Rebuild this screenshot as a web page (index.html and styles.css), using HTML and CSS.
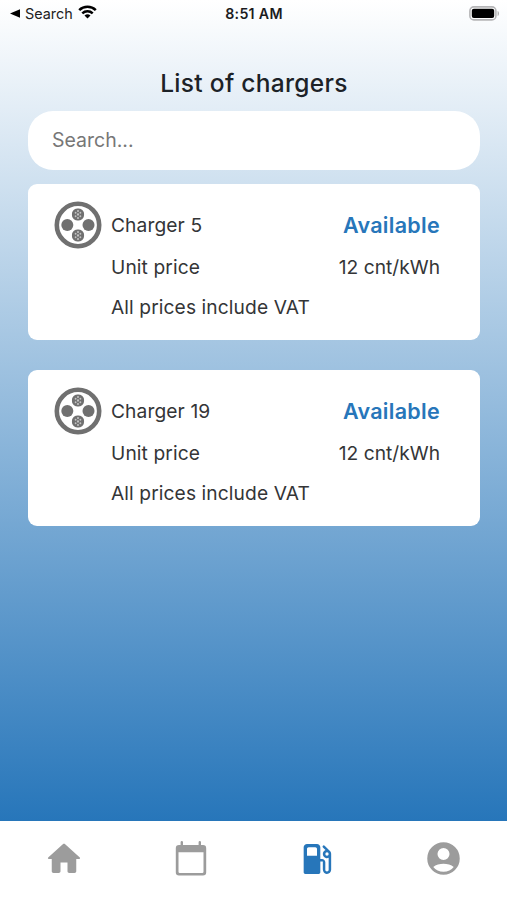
FILE: index.html
```html
<!DOCTYPE html>
<html lang="en">
<head>
<meta charset="utf-8">
<title>List of chargers</title>
<link rel="stylesheet" href="styles.css">
</head>
<body>
<svg class="defs" aria-hidden="true">
  <defs>
    <symbol id="pin" viewBox="0 0 12 12">
      <circle cx="6" cy="6" r="6" fill="#707070"/>
      <g fill="#c2c2c2"><circle cx="6" cy="2.700" r="1"/><circle cx="6" cy="6" r="1.100"/><circle cx="6" cy="9.300" r="1"/><circle cx="3.700" cy="4.350" r=".9"/><circle cx="8.300" cy="4.350" r=".9"/><circle cx="3.700" cy="7.650" r=".9"/><circle cx="8.300" cy="7.650" r=".9"/></g>
    </symbol>
    <symbol id="plug" viewBox="0 0 48 48">
      <circle cx="24" cy="24" r="21.200" fill="#fff" stroke="#707070" stroke-width="4.600"/>
      <circle cx="13.300" cy="24" r="6" fill="#707070"/>
      <circle cx="34.500" cy="24" r="6" fill="#707070"/>
      <use href="#pin" x="17.800" y="7.300" width="12.400" height="12.400"/>
      <use href="#pin" x="17.800" y="28.300" width="12.400" height="12.400"/>
    </symbol>
  </defs>
</svg>
<div class="app">
  <header class="status">
    <div class="back">
      <svg width="10" height="9" viewBox="0 0 10 9"><path d="M0 4.500 10 .3v8.400z"/></svg>
      <span>Search</span>
      <svg class="wifi" width="19" height="14" viewBox="0 0 19 14"><g fill="none" stroke="#000" stroke-width="2.500"><path d="M1.200 5.200a11.800 11.800 0 0 1 16.600 0"/><path d="M4.300 8.400a7.400 7.400 0 0 1 10.400 0"/></g><path d="m9.500 13.600-3-3a4.300 4.300 0 0 1 6 0z"/></svg>
    </div>
    <div class="time">8:51 AM</div>
    <svg class="battery" width="31" height="15" viewBox="0 0 31 15"><rect x=".9" y=".9" width="26" height="13" rx="4" fill="#fff" stroke="#b5b5b7" stroke-width="1.600"/><rect x="2.800" y="2.800" width="22.400" height="9.200" rx="2"/><path d="M28.600 5v5c1.800-.6 1.800-4.400 0-5z" fill="#aaa"/></svg>
  </header>
  <main class="content">
    <h1>List of chargers</h1>
    <input class="search" type="text" placeholder="Search..." aria-label="Search">
    <section class="card">
      <svg class="plug"><use href="#plug"/></svg>
      <span class="label name">Charger 5</span><span class="state">Available</span>
      <span class="label unit">Unit price</span><span class="price">12 cnt/kWh</span>
      <span class="label vat">All prices include VAT</span>
    </section>
    <section class="card">
      <svg class="plug"><use href="#plug"/></svg>
      <span class="label name">Charger 19</span><span class="state">Available</span>
      <span class="label unit">Unit price</span><span class="price">12 cnt/kWh</span>
      <span class="label vat">All prices include VAT</span>
    </section>
  </main>
  <nav class="tabs">
    <a><svg width="42" height="42" viewBox="0 0 24 24"><path d="M10 19v-5h4v5c0 .55.45 1 1 1h3c.55 0 1-.45 1-1v-7h1.700c.46 0 .68-.57.33-.87L12.670 3.600c-.38-.34-.96-.34-1.340 0l-8.360 7.530c-.34.3-.13.87.33.87H5v7c0 .55.45 1 1 1h3c.55 0 1-.45 1-1z"/></svg></a>
    <a><svg width="32" height="35" viewBox="0 0 32 35"><path fill-rule="evenodd" d="M5.600 1.200a1.200 1.200 0 0 1 2.400 0V4h15.600V1.200a1.200 1.200 0 0 1 2.400 0V4h2a3.200 3.200 0 0 1 3.200 3.200v24a3.200 3.200 0 0 1-3.200 3.200H4a3.200 3.200 0 0 1-3.200-3.200v-24A3.200 3.200 0 0 1 4 4h1.600zM3.500 11.200v19.500a1.200 1.200 0 0 0 1.200 1.200h22.600a1.200 1.200 0 0 0 1.200-1.200V11.200z"/></svg></a>
    <a class="active"><svg width="40" height="40" viewBox="0 0 24 24"><path d="m19.770 7.230.01-.01-3.190-3.190a.75.75 0 0 0-1.060 1.060l1.580 1.580c-1.050.4-1.760 1.470-1.580 2.710.15 1.080 1.070 1.970 2.150 2.110.47.06.9-.02 1.310-.2v7.210c0 .55-.45 1-1 1s-1-.45-1-1V14c0-1.100-.9-2-2-2h-1V5c0-1.100-.9-2-2-2H6c-1.100 0-2 .9-2 2v15c0 .55.45 1 1 1h8c.55 0 1-.45 1-1v-6.500h1.500v4.860c0 1.310.94 2.500 2.240 2.630 1.500.15 2.760-1.030 2.760-2.490V9c0-.69-.28-1.320-.73-1.770zM12 10H6V6c0-.55.45-1 1-1h4c.55 0 1 .45 1 1v4zm6 0a1 1 0 1 1 0-2 1 1 0 0 1 0 2z"/></svg></a>
    <a><svg width="39" height="39" viewBox="0 0 24 24"><path d="M12 2a10 10 0 1 0 0 20 10 10 0 0 0 0-20zm0 3.500a3.700 3.700 0 1 1 0 7.400 3.700 3.700 0 0 1 0-7.400zm0 14.600c-2.600 0-4.900-1.100-6.300-2.900 1.500-1.300 4.100-2 6.300-2s4.800.7 6.300 2c-1.400 1.800-3.700 2.900-6.300 2.900z"/></svg></a>
  </nav>
</div>
</body>
</html>
```

FILE: styles.css
```css
* { box-sizing: border-box; }
body { margin: 0; font-family: Inter, "Liberation Sans", sans-serif; color: #343537; }
.defs { position: absolute; width: 0; height: 0; }
.app { width: 507px; height: 900px; display: flex; flex-direction: column; background: linear-gradient(#fff 0, #2776ba 821px, #fff 821px); }
.status { height: 28px; padding: 0 7px 2px 10px; display: grid; grid-template-columns: 1fr auto 1fr; align-items: center; }
.back { display: flex; align-items: center; gap: 5px; font-size: 14.4px; color: #222; }
.wifi { margin: -2px 0 0; }
.time { margin-right: 2px; font-size: 14.2px; font-weight: 600; color: #1c1c1e; letter-spacing: .3px; }
.battery { justify-self: end; }
.content { flex: 1; padding: 38px 27px 0 28px; }
h1 { margin: 0; height: 45px; line-height: 34px; font-size: 24.5px; font-weight: 500; letter-spacing: .3px; text-align: center; color: #1c2227; }
.search { display: block; width: 100%; height: 59px; margin: 0 0 14px; padding: 0 24px 2px; border: 0; border-radius: 25px; background: #fff; font: 19.5px Inter, sans-serif; }
.search::placeholder { color: #777; opacity: 1; }
.card { height: 156px; margin-bottom: 30px; padding: 16px 40px 0 26px; border-radius: 9px; background: #fff; display: grid; grid-template-columns: 57px 1fr auto; grid-template-rows: 49px 36px 43px; align-items: center; font-size: 19.2px; letter-spacing: .1px; }
.plug { width: 48px; height: 48px; }
.state { color: #2776ba; font-size: 21.5px; font-weight: 600; letter-spacing: .3px; }
.label { grid-column: 2; }
.vat { grid-column: 2 / 4; }
.price, .state { text-align: right; }
.price { letter-spacing: 0; }
.tabs { height: 79px; padding: 0 0 4px 1px; background: #fff; display: grid; grid-template-columns: repeat(4, 1fr); align-items: center; justify-items: center; }
.tabs a { display: flex; color: #9c9c9c; }
.tabs .active { color: #2776ba; }
.tabs svg { fill: currentColor; }
```
